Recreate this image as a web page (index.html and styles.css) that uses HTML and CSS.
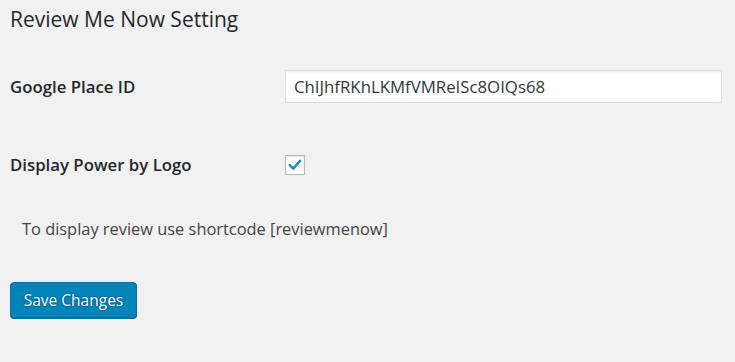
FILE: index.html
```html
<!DOCTYPE html>
<html>
<head>
<meta charset="utf-8">
<link rel="stylesheet" href="styles.css">
</head>
<body>
<div class="wrap">
  <h1 class="title">Review Me Now Setting</h1>
  <form class="settings">
    <div class="field-row row-input">
      <label class="field-label">Google Place ID</label>
      <div class="field-control">
        <div class="text-input">ChIJhfRKhLKMfVMReISc8OIQs68</div>
      </div>
    </div>
    <div class="field-row row-check">
      <label class="field-label">Display Power by Logo</label>
      <div class="field-control">
        <span class="checkbox">
          <svg viewBox="0 0 20 20" width="20" height="20"><path d="M4.2 10.2 L8 14 L15.6 5.4" fill="none" stroke="#1e8cbe" stroke-width="2.8" stroke-linecap="round" stroke-linejoin="round"/></svg>
        </span>
      </div>
    </div>
    <p class="note">To display review use shortcode [reviewmenow]</p>
    <div class="submit">
      <button type="button" class="button-primary">Save Changes</button>
    </div>
  </form>
</div>
</body>
</html>
```
FILE: styles.css
```css
html, body {
  margin: 0;
  padding: 0;
  background: #f1f1f1;
}
body {
  font-family: "Open Sans", "Noto Sans", sans-serif;
  color: #23282d;
  width: 735px;
  height: 362px;
  overflow: hidden;
}
.wrap {
  padding: 0 13px 0 10px;
}
.title {
  margin: 0;
  padding-top: 5px;
  font-size: 21px;
  line-height: 29px;
  font-weight: 400;
  color: #23282d;
}
.settings {
  display: flex;
  flex-direction: column;
}
.field-row {
  display: grid;
  grid-template-columns: 275px 1fr;
  align-items: center;
}
.row-input {
  margin-top: 36px;
  height: 33px;
}
.row-check {
  margin-top: 50px;
  height: 20px;
}
.field-label {
  font-size: 16.8px;
  font-weight: 600;
  color: #23282d;
}
.text-input {
  box-sizing: border-box;
  height: 33px;
  background: #fff;
  border: 1px solid #ddd;
  box-shadow: inset 0 1px 2px rgba(0,0,0,0.07);
  padding: 0 8px;
  font-size: 16.8px;
  line-height: 31px;
  color: #32373c;
}
.checkbox {
  display: flex;
  box-sizing: border-box;
  width: 20px;
  height: 20px;
  background: #fff;
  border: 1px solid #b4b9be;
  box-shadow: inset 0 1px 2px rgba(0,0,0,0.1);
  align-items: center;
  justify-content: center;
}
.checkbox svg {
  display: block;
  width: 18px;
  height: 18px;
}
.note {
  margin: 45px 0 0 12px;
  font-size: 16.4px;
  line-height: 22px;
  color: #444;
}
.submit {
  margin-top: 42px;
}
.button-primary {
  box-sizing: border-box;
  height: 36px;
  width: 127px;
  padding: 0 12px;
  background: #0085ba;
  border: 1px solid #0073aa;
  border-radius: 4px;
  box-shadow: 0 1px 0 #006799;
  color: #fff;
  font-family: "Open Sans", "Noto Sans", sans-serif;
  font-size: 15.5px;
  line-height: 32px;
  text-shadow: 0 -1px 1px #006799, 1px 0 1px #006799, 0 1px 1px #006799, -1px 0 1px #006799;
  cursor: pointer;
}
```
